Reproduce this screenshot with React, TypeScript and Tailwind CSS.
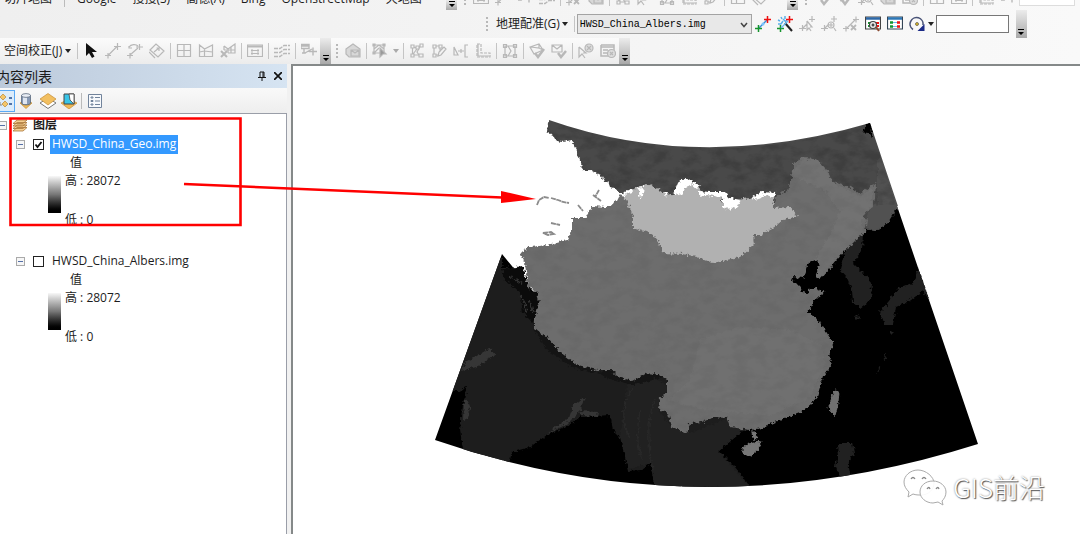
import type { ReactNode } from 'react'

type IconName =
  | 'pointer' | 'link' | 'curve' | 'diamond' | 'grid' | 'mesh' | 'meshX' | 'table' | 'streams' | 'join'
  | 'house' | 'editArrow' | 'nodes' | 'nodePen' | 'align' | 'corner' | 'square' | 'check' | 'boxCheck'
  | 'arrowX' | 'listX' | 'addPoint' | 'wand' | 'linkCursor' | 'linkZoom' | 'linkX' | 'viewZoom' | 'view' | 'rotate'

const icons: Record<IconName, ReactNode> = {
  pointer: <path d="M3 0v13l3-3 3 5 2.500-1.500L9 9h5z" fill="#111" stroke="none" />,
  link: <path d="M0 12.500h6M3 10v5.500M3 12.500l9-9M9 3.500h7M12.500 0v7" />,
  curve: <path d="M0 12.500h6M3 10v5.500M3 12l8-7M2 4c2-3 7-3 9-1M9 4h7M12.500 1v6M2 3v2h3" />,
  diamond: <path d="M1 7l6-6 8 7-6 6zM5 9l5-4M7.500 5H10v3M0 9l6 6" />,
  grid: <path d="M1.500 1.500h13v12h-13zM8 1.500v12M1.500 7.500h13" />,
  mesh: <path d="M1.500 2l5 4 8-4v11.500h-13zM6.500 6v7.500M1.500 9l5-1 8 1" />,
  meshX: <><path d="M4 3l4 3 7-5v9H8M8 6v4M4 3v4M4 7h11M11 4v6" /><path d="M1 8l6 6M7 8l-6 6" strokeWidth="2" /></>,
  table: <><path d="M.5 2h15v11.500H.5z" /><path d="M.5 3.500h15" strokeWidth="2" /><path d="M4 7.500h2M10 7.500h2M4 10.500h2M10 10.500h2" strokeWidth="2" /><path d="M6 7.500h4M6 10.500h4" /></>,
  streams: <path d="M0 5.500h6l4-3h6M0 9.500h6l4-3h6M0 13.500h6l4-3h6" strokeDasharray="4 1" strokeWidth="1.400" />,
  join: <path d="M0 1.500h8v4H0zM0 3h8M3 5.500v5M1 10h4M4 10l7-4M8 8.500h8M12 4.500v8" strokeWidth="1.400" />,
  house: <><path d="M1 6l7-5 7 5v8H4L1 11z" fill="#d8d8d8" /><path d="M6 7h8v6H6zM6 7l4 3 4-3" /></>,
  editArrow: <><path d="M2 2h10v8H2zM2 6l5-4 5 4M2 10l5-5M1 1h2v2H1zM11 1h2v2h-2zM1 9h2v2H1z" /><path d="M8 5l6 6-3 0-3 3z" fill="#999" /></>,
  nodes: <path d="M2 2h3v3H2zM7 3h3v3H7zM11 1h3v3h-3zM2 11h3v3H2zM10 11h4v3h-4zM3.500 5v6M5 4l2 1M10 4l1-1M8 6l-4 5M10 12l-2-3 3-5M5 12h5" />,
  nodePen: <path d="M2 2h3v3H2zM8 2h3v3H8zM2 11h3v3H2zM3 5v6M5 3h3M9 5v4M5 12h3M7 13l1-4 5-5 2 2-5 6z" />,
  align: <path d="M1 4v8h4zM5 8h6M8 6v4M15 2h-3v12h3" />,
  corner: <><path d="M2 1h4v9h9v4H2z" strokeDasharray="3 1" /><path d="M3 1v12h11" /></>,
  square: <path d="M3 3h10v10H3zM1.500 1.500h3v3h-3zM11.500 1.500h3v3h-3zM1.500 11.500h3v3h-3zM11.500 11.500h3v3h-3zM6 3l3 5-3 5" />,
  check: <><path d="M1 4l9-3 4 6-9 4zM2 4l8 1 0-4M10 5l4 2" /><path d="M6 10l3 4 6-8" strokeWidth="2.500" /></>,
  boxCheck: <><path d="M1 2h10v7H1zM1 2l5 4 5-4" /><path d="M7 10l3 4 5-6" strokeWidth="2.500" /></>,
  arrowX: <><path d="M1 4v10l3-3 3 4M1 4l7 6H5" /><circle cx="11" cy="5" r="4" fill="#ddd" /><path d="M9 3l4 4M13 3L9 7" /></>,
  listX: <><path d="M1 2h13v9M1 2v11h7M1 4h13M3 7h5M3 10h4" strokeWidth="1.500" /><circle cx="11.500" cy="10.500" r="4" fill="#ddd" /><path d="M10 9l3 3M13 9l-3 3" /></>,
  addPoint: (
    <>
      <path d="M4 12l8-8" stroke="#3a8fd8" strokeWidth="1.500" />
      <path d="M0 12.500h7M3.500 9v7" stroke="#15942d" strokeWidth="1.500" />
      <path d="M9 3.500h7M12.500 0v7" stroke="#e11" strokeWidth="1.500" />
      <circle cx="8" cy="8" r="1.500" fill="#7ac4ff" stroke="none" />
    </>
  ),
  wand: (
    <>
      <path d="M1 4l2 1M4 1l1 2M8 0v3M1 8h3M10 4L8 6M4 8l2-3M6 3l2 2" stroke="#59aee8" strokeWidth="1.500" />
      <path d="M8 7l7 8" stroke="#222" strokeWidth="2" />
      <path d="M0 12.500h7M3.500 9v7" stroke="#15942d" strokeWidth="1.500" />
      <path d="M4 12l7-7" stroke="#68b8ee" />
      <path d="M9 3.500h7M12.500 0v7" stroke="#e11" strokeWidth="1.500" />
    </>
  ),
  linkCursor: <path d="M0 12.500h7M3.500 9v6M4 12l4-4M10 3.500h6M13 0v6M8 5v9l2-2 2 3M8 5l5 6h-2" />,
  linkZoom: <path d="M0 12.500h7M3.500 9v6M4 12l4-4M10 3h6M13 0v6M13 12l2 3M8 9h4M10 7v4M13 9a3 3 0 1 1-6 0 3 3 0 0 1 6 0" />,
  linkX: <><path d="M0 12.500h6M3 10v5.500M4 12l8-8M10 3.500h6M13 .5v6" /><path d="M8 9l5 5M13 9l-5 5" strokeWidth="1.800" /></>,
  viewZoom: (
    <>
      <path d="M.5 1h15v12H.5z" fill="#fff" stroke="#444" />
      <path d="M1 2.500h14" stroke="#2d68a8" strokeWidth="2.500" />
      <path d="M3 7h2M3 10h2" stroke="#15942d" strokeWidth="2" />
      <path d="M11 7h3M12 10h2" stroke="#e11" strokeWidth="2" />
      <circle cx="8" cy="9" r="3.500" fill="#eee" stroke="#444" />
      <path d="M6.500 9h3M8 7.500v3" stroke="#222" />
      <path d="M11 11l3 4" stroke="#8a4b32" strokeWidth="2" />
    </>
  ),
  view: (
    <>
      <path d="M.5 1h15v12H.5z" fill="#fff" stroke="#345" />
      <path d="M1 2.500h14" stroke="#2d78b8" strokeWidth="2.500" />
      <path d="M3 6.500h3M3 10.500h3" stroke="#15942d" strokeWidth="2.500" />
      <path d="M10 6.500h3M10 10.500h3" stroke="#e11" strokeWidth="2.500" />
      <path d="M6 6.500h4M6 10.500h4" stroke="#68b8ee" />
    </>
  ),
  rotate: (
    <>
      <path d="M4 13.500A6.500 6.500 0 1 1 14 9" stroke="#4a5478" strokeWidth="1.600" />
      <path d="M15.500 8v7H8.500z" fill="#1b2a86" stroke="none" />
      <circle cx="8" cy="8" r="1.500" fill="#e5c02a" stroke="#333" strokeWidth=".6" />
    </>
  ),
}

const Icon = ({ name }: { name: IconName }) => (
  <svg viewBox="0 0 16 16" className="w-4 h-4" fill="none" stroke="#b8b8b8" strokeWidth="1.200" aria-hidden="true">
    {icons[name]}
  </svg>
)

const ToolButton = ({ name }: { name: IconName }) => (
  <button type="button" aria-label={name} className="w-[22px] h-[22px] shrink-0 flex items-center justify-center">
    <Icon name={name} />
  </button>
)

const Separator = () => <span className="w-px h-4 mx-[2px] shrink-0 bg-[#c4c4c4]" />

const Caret = ({ muted = false }: { muted?: boolean }) => (
  <svg viewBox="0 0 6 4" className={`w-[6px] h-1 shrink-0 ${muted ? 'fill-[#aaa]' : 'fill-[#222]'}`} aria-hidden="true">
    <path d="M0 0h6L3 4z" />
  </svg>
)

const Dots = () => (
  <svg viewBox="0 0 3 16" className="w-[3px] h-4 mx-[3px] shrink-0 fill-[#b8b8b8]" aria-hidden="true">
    <path d="M0 1h2v2H0zM0 5h2v2H0zM0 9h2v2H0zM0 13h2v2H0z" />
  </svg>
)

const Overflow = () => (
  <button
    type="button"
    aria-label="more"
    className="w-[11px] self-stretch shrink-0 flex items-end justify-center pb-[3px] bg-linear-to-b from-[#ececec] to-[#a9a9a9]"
  >
    <svg viewBox="0 0 6 6" className="w-[6px] h-[6px] fill-black" aria-hidden="true">
      <path d="M0 0h6v1H0zM0 3h6L3 6z" />
    </svg>
  </button>
)

const basemaps = ['Google', '搜搜(S)', '高德(A)', 'Bing', 'OpenstreetMap', '天地图']

const upperTools: IconName[][] = [
  ['table', 'link', 'join', 'streams'],
  ['linkX', 'house'],
  ['nodes', 'arrowX', 'square', 'corner', 'nodePen'],
  ['mesh', 'diamond'],
]

const upperToolsRight: IconName[][] = [
  ['boxCheck', 'check', 'linkZoom', 'house', 'listX'],
  ['grid', 'table'],
  ['corner', 'join'],
]

const BasemapBar = () => (
  <div className="h-[10px] flex items-end overflow-hidden">
    <nav className="flex items-end gap-4 pl-1 w-[446px] shrink-0 pb-[3px] whitespace-nowrap leading-4">
      <button type="button">切片地图</button>
      <span className="w-px h-3 bg-[#bbb] -mx-1" />
      {basemaps.map((name) => (
        <button type="button" key={name}>{name}</button>
      ))}
    </nav>
    <Overflow />
    <div className="flex items-center pl-1 pb-px">
      <Dots />
      {upperTools.map((group, i) => (
        <div key={i} className="flex items-center">
          {i > 0 && <Separator />}
          {group.map((name) => <ToolButton key={name} name={name} />)}
        </div>
      ))}
    </div>
    <span className="w-4 shrink-0" />
    <Overflow />
    <div className="flex items-center pl-1 pb-px">
      <Dots />
      {upperToolsRight.map((group, i) => (
        <div key={i} className="flex items-center">
          {i > 0 && <Separator />}
          {group.map((name) => <ToolButton key={name} name={name} />)}
        </div>
      ))}
    </div>
    <input aria-label="scale" className="w-14 h-5 mb-1 bg-white border border-[#ddd]" />
  </div>
)

const GeoreferenceBar = () => (
  <div className="h-7 flex items-center pl-[483px]">
    <Dots />
    <button type="button" className="flex items-center gap-[2px] px-1 whitespace-nowrap">
      地理配准(G) <Caret />
    </button>
    <Separator />
    <div className="relative shrink-0">
      <select
        aria-label="图层"
        className="block appearance-none w-[175px] h-5 pl-[2px] border border-[#a3a3a3] bg-[#e8e8e8] font-['Liberation_Mono',monospace] text-[10px] text-black"
      >
        <option>HWSD_China_Albers.img</option>
      </select>
      <svg viewBox="0 0 8 6" className="absolute right-1 top-2 w-2 h-[6px] pointer-events-none" fill="none" stroke="#444" strokeWidth="1.500" aria-hidden="true">
        <path d="M1 1l3 3.500L7 1" />
      </svg>
    </div>
    {(['addPoint', 'wand', 'linkCursor', 'linkZoom', 'linkX', 'viewZoom', 'view', 'rotate'] as IconName[]).map((name) => (
      <ToolButton key={name} name={name} />
    ))}
    <Caret />
    <input aria-label="角度" className="w-[73px] h-[18px] ml-[2px] mr-[7px] shrink-0 bg-white border border-[#777]" />
    <Overflow />
  </div>
)

const adjustTools: IconName[][] = [
  ['pointer', 'link', 'curve', 'diamond'],
  ['grid', 'mesh', 'meshX'],
  ['table'],
  ['streams'],
  ['join'],
]

const topologyTools: IconName[][] = [
  ['nodes', 'nodePen', 'align', 'corner'],
  ['square'],
  ['check', 'boxCheck'],
  ['arrowX', 'listX'],
]

const AdjustmentBar = () => (
  <div className="h-[26px] flex items-center">
    <div className="h-full flex items-center bg-linear-to-b from-[#fbfbfb] to-[#ececec]">
      <button type="button" className="w-[75px] shrink-0 flex items-center gap-[3px] pl-1 whitespace-nowrap">
        空间校正(J) <Caret />
      </button>
      {adjustTools.map((group, i) => (
        <div key={i} className="flex items-center">
          <Separator />
          {group.map((name) => <ToolButton key={name} name={name} />)}
        </div>
      ))}
      <Overflow />
    </div>
    <div className="h-full flex items-center bg-linear-to-b from-[#fbfbfb] to-[#ececec] pl-[2px]">
      <Dots />
      <ToolButton name="house" />
      <Separator />
      <ToolButton name="editArrow" />
      <span className="w-[10px] flex justify-center"><Caret muted /></span>
      {topologyTools.map((group, i) => (
        <div key={i} className="flex items-center">
          <Separator />
          {group.map((name) => <ToolButton key={name} name={name} />)}
        </div>
      ))}
      <Overflow />
    </div>
  </div>
)

const Expander = () => (
  <button type="button" aria-label="collapse" className="w-[9px] h-[9px] shrink-0 flex items-center justify-center border border-[#aaa] bg-[#f6f6f6]">
    <span className="w-[5px] h-px bg-[#5570a8]" />
  </button>
)

interface RasterLayer {
  name: string
  high: number
  low: number
  visible: boolean
  selected: boolean
}

const layers: RasterLayer[] = [
  { name: 'HWSD_China_Geo.img', high: 28072, low: 0, visible: true, selected: true },
  { name: 'HWSD_China_Albers.img', high: 28072, low: 0, visible: false, selected: false },
]

const LayerNode = ({ layer }: { layer: RasterLayer }) => (
  <li className="pb-[23px]">
    <div className="h-5 flex items-center pl-4">
      <Expander />
      <label className="flex items-center">
        <input
          type="checkbox"
          defaultChecked={layer.visible}
          className="peer appearance-none w-[11px] h-[11px] ml-2 border border-[#222] bg-white"
        />
        <svg viewBox="0 0 11 11" className="w-[11px] h-[11px] -ml-[11px] mr-[6px] invisible peer-checked:visible pointer-events-none" fill="none" stroke="#111" strokeWidth="1.800" aria-hidden="true">
          <path d="M2.500 5.500l2 2.500 4-5" />
        </svg>
        <span className={layer.selected ? 'h-[19px] leading-[18px] px-[2px] bg-[#3399ff] text-white' : 'h-[19px] leading-[18px] px-[2px]'}>
          {layer.name}
        </span>
      </label>
    </div>
    <div className="h-[18px] leading-[18px] pl-[70px]">值</div>
    <div className="flex gap-1 pl-12">
      <div className="w-[13px] h-[37px] mt-1 bg-linear-to-b from-[#f8f8f8] via-[#777] to-black" />
      <div className="h-14 flex flex-col justify-between leading-[17px]">
        <span>高 : {layer.high}</span>
        <span>低 : {layer.low}</span>
      </div>
    </div>
  </li>
)

const ContentsPanel = () => (
  <aside className="w-[287px] shrink-0 flex flex-col">
    <header className="h-6 flex items-center bg-linear-to-r from-[#bccadb] to-[#d6e4f2] overflow-hidden">
      <h2 className="flex-1 -ml-1 text-[14px] whitespace-nowrap">内容列表</h2>
      <button type="button" aria-label="pin" className="w-4 h-4 flex items-center justify-center">
        <svg viewBox="0 0 8 10" className="w-2 h-[10px]" fill="none" stroke="#111"><path d="M2 6V1h4v5M5 1v5M0 6.500h8M4 6.500V10" /></svg>
      </button>
      <button type="button" aria-label="close" className="w-4 h-4 mr-px flex items-center justify-center">
        <svg viewBox="0 0 8 8" className="w-2 h-2" fill="none" stroke="#111" strokeWidth="1.700"><path d="M0 0l8 8M8 0L0 8" /></svg>
      </button>
    </header>
    <div className="h-[25px] flex items-center bg-linear-to-b from-[#f9f9f9] to-[#eee]">
      <button type="button" aria-label="按绘制顺序列出" className="w-[15px] h-[22px] flex items-center justify-end border border-l-0 border-[#5aa9f5] bg-[#dcecfb]">
        <svg viewBox="0 0 14 16" className="w-[14px] h-4">
          <path d="M3 1l3 3-3 3-3-3zM5 8l3 3-3 3-3-3z" fill="#f4c669" stroke="#b98637" strokeWidth=".7" />
          <path d="M0 9v3h2" fill="none" stroke="#888" />
          <path d="M9 4h3v2H9zM9 10h3v2H9z" fill="#5173a8" />
        </svg>
      </button>
      <button type="button" aria-label="按源列出" className="w-[22px] flex justify-center">
        <svg viewBox="0 0 16 16" className="w-4 h-4">
          <path d="M2 10l6-3 6 3-6 5.500z" fill="#efb956" stroke="#c58d33" strokeWidth=".7" />
          <path d="M3.500 2.500V10c0 2.500 9 2.500 9 0V2.500z" fill="#8799b5" stroke="#4b5a70" strokeWidth=".7" />
          <path d="M5 4h4v7H5z" fill="#dfe6f1" />
          <ellipse cx="8" cy="2.500" rx="4.500" ry="1.900" fill="#e8edf5" stroke="#4b5a70" strokeWidth=".7" />
        </svg>
      </button>
      <button type="button" aria-label="按可见性列出" className="w-[21px] flex justify-center">
        <svg viewBox="0 0 16 16" className="w-4 h-4">
          <path d="M0 10l8-5 8 5-8 5.500z" fill="#fff" stroke="#777" />
          <path d="M0 6l8-5.500L16 6l-8 6z" fill="#f2bf60" stroke="#c58d33" strokeWidth=".7" />
        </svg>
      </button>
      <button type="button" aria-label="按选择列出" className="w-[22px] flex justify-center">
        <svg viewBox="0 0 16 16" className="w-4 h-4">
          <path d="M0 10l8-4 8 4-8 6z" fill="#efb956" stroke="#c58d33" strokeWidth=".7" />
          <path d="M3 1h10v10H3z" fill="#38c5e8" stroke="#444" />
          <path d="M8 1h5v10l-4-4z" fill="#fff" stroke="#444" strokeWidth=".8" />
        </svg>
      </button>
      <span className="w-px h-4 bg-[#bbb] ml-px mr-[6px]" />
      <button type="button" aria-label="选项">
        <svg viewBox="0 0 14 14" className="w-[14px] h-[14px]" fill="#f7f9fc" stroke="#71839b">
          <path d="M.5.5h13v13H.5z" />
          <path d="M3 3h2v1H3zM3 6.500h2v1H3zM3 10h2v1H3zM7 3.500h5M7 7h5M7 10.500h5" />
        </svg>
      </button>
    </div>
    <div className="flex-1 bg-white border-t border-r border-[#9a9ea8] pt-[2px] whitespace-nowrap">
      <div className="h-[18px] flex items-center">
        <span className="-ml-[2px]"><Expander /></span>
        <svg viewBox="0 0 16 13" className="w-4 h-[13px] ml-[5px] mr-[5px]" fill="#f6cf91" stroke="#a9763a" strokeWidth=".8" aria-hidden="true">
          <path d="M1 12l4-3.500h10L11 12zM1 9.500L5 6h10l-4 3.500zM1 7l4-3.500h10L11 7zM1 4.500L5 1h10l-4 3.500z" />
        </svg>
        <span className="font-bold leading-[18px]">图层</span>
      </div>
      <ul>
        {layers.map((layer) => <LayerNode key={layer.name} layer={layer} />)}
      </ul>
    </div>
  </aside>
)

const siberia = 'M549 120L580 130 620 139 660 145 700 148 740 148 780 144 820 137 850 129 870 123 895 202 892 213 886 223 879 230 870 231 862 226 840 240 640 240 620 195 615 192 610 188 605 183 602 176 592 171 583 171 580 160 577 150 572 140 562 142 556 141 553 135 547 132z'
const china = 'M620 194L617 200 607 207 592 206 585 218 572 218 572 230 567 240 548 245 530 247 520 253 525 262 526 272 528 287 537 292 539 303 535 318 535 328 547 338 560 352 577 365 597 370 612 370 620 378 633 381 647 373 660 375 667 380 667 393 660 398 658 408 668 413 672 427 687 433 690 423 703 422 713 417 727 418 730 427 750 430 763 428 780 420 800 413 811 404 817 397 823 377 832 365 829 355 834 345 827 333 817 318 808 312 817 298 825 292 815 288 833 265 845 250 853 248 865 233 867 220 863 215 873 207 875 197 876 183 860 194 850 187 833 182 827 170 817 159 803 158 793 163 793 173 788 190 777 195 773 208z'
const mongolia = 'M620 194L628 191 637 187 647 184 657 188 667 195 677 193 678 182 687 178 698 185 703 193 720 193 725 208 733 208 738 200 750 198 762 192 775 195 773 208 790 207 797 216 783 220 773 228 760 235 753 235 754 244 740 257 713 263 697 257 683 254 663 253 657 238 647 232 633 228 633 217 628 203z'
const southAsia = 'M502 254L502 266 510 268 522 266 530 290 560 340 620 365 672 370 690 415 730 415 750 430 735 432 719 451 735 467 744 478 750 487 700 489 655 486 650 463 641 470 628 471 628 456 623 440 613 430 610 415 580 417 570 425 547 435 530 447 512 452 509 463 490 458 463 450 460 430 462 410 467 385 462 391 451 391z'

const SoilMap = () => (
  <svg viewBox="293 66 787 468" className="w-full h-auto block" role="img" aria-label="HWSD_China_Geo.img">
    <defs>
      <filter id="ragged" x="-5%" y="-5%" width="110%" height="110%" colorInterpolationFilters="sRGB">
        <feTurbulence type="fractalNoise" baseFrequency=".3" numOctaves="2" seed="4" result="n" />
        <feDisplacementMap in="SourceGraphic" in2="n" scale="6" xChannelSelector="R" yChannelSelector="G" />
      </filter>
      <filter id="grain" x="0" y="0" width="100%" height="100%" colorInterpolationFilters="sRGB">
        <feTurbulence type="fractalNoise" baseFrequency=".06 .1" numOctaves="5" seed="9" />
        <feColorMatrix values="0 0 0 0 0  0 0 0 0 0  0 0 0 0 0  3 0 0 0 -1.200" />
      </filter>
      <clipPath id="frame">
        <path d="M549 120Q700 173 870 123L978 444Q700 532 435 440L502 254 540 240 530 180z" />
      </clipPath>
      <clipPath id="north"><path d={siberia} /></clipPath>
      <clipPath id="land"><path d={china} /></clipPath>
    </defs>
    <path d="M502 254L435 440Q700 532 978 444L895 200 850 190 700 300 540 300z" fill="#000" />
    <g clipPath="url(#frame)">
      <g filter="url(#ragged)">
        <path d={southAsia} fill="#1d1d1d" />
        <path d="M480 270L502 254 480 320 451 391 435 395z" fill="#1d1d1d" />
        <path d="M627 385L645 374 668 385 666 397 659 410 672 428 690 433 728 418 744 430 719 451 750 488 655 487 650 463 628 470 620 437z" fill="#212121" />
        <path d="M633 388C620 405 622 425 631 440M640 412Q634 440 643 462M654 400Q644 430 653 470" fill="none" stroke="#282828" strokeWidth="1.500" />
        <path d="M502 268L523 268 529 290 538 292 538 315 533 323 523 313 520 292 505 280z" fill="#0b0b0b" />
        <path d="M520 295l5 8 1 10M510 276l12 8M530 301l3 11" stroke="#333" strokeWidth="1.500" fill="none" />
        <path d="M461 371L466 362 475 357 490 348 495 355 479 366zM464 400l7 4-4 14-4 2zM547 434l11-9 11-7 4-12 12-10-5 15-13 13zM580 411l18 1-1 5-17-1z" fill="#363636" />
        <path d="M533 328L547 338 560 352 577 365 597 370 592 373 570 366 548 351zM598 373l10-4 10 8 16 4 14-8 17 3-5 2-26 7-22-5z" fill="#141414" />
        <path d="M549 112L700 140 880 112 895 202 892 213 886 223 879 230 870 231 862 226 840 240 640 240 620 195 615 192 610 188 605 183 602 176 592 171 583 171 580 160 577 150 572 140 562 142 556 141 553 135 547 132z" fill="#494949" />
        <path d="M877 160L883 155 900 203 887 224 874 231 865 226 868 212 877 203 877 184z" fill="#515151" />
      </g>
      <g clipPath="url(#north)">
        <rect x="540" y="115" width="360" height="90" filter="url(#grain)" opacity=".14" />
      </g>
      <g filter="url(#ragged)">
        <path d={china} fill="#6d6d6d" />
        <path d="M790 175L803 159 818 160 835 184 860 196 872 188 872 204 862 218 863 232 848 247 831 263 818 282 807 270 830 235 840 212 824 190z" fill="#727272" />
        <path d="M700 340L740 326 790 330 822 345 825 365 810 398 770 416 700 409 668 400 690 380z" fill="#707070" />
      </g>
      <g clipPath="url(#land)">
        <rect x="515" y="150" width="365" height="285" filter="url(#grain)" opacity=".04" />
      </g>
      <g filter="url(#ragged)">
        <path d={mongolia} fill="#b1b1b1" />
        <path d="M792 281L793 277 803 278 808 263 817 261 819 267 815 277 820 279 830 268 841 266 842 278 851 282 850 302 826 307 812 315 808 312 817 298 825 293 818 288 810 288 808 294 803 293 801 286z" fill="#000" />
        <path d="M845 251L863 233 862 250 853 263 863 273 872 283 871 300 860 308 853 303 852 289 847 278 840 270z" fill="#212121" />
        <path d="M918 267L930 300 922 291 907 302 896 307 893 325 885 325 880 312 890 301 897 289 913 283z" fill="#212121" />
        <path d="M835 390L839 391 838 403 835 417 829 407z" fill="#707070" stroke="#707070" />
        <path d="M743 447L753 442 761 443 757 451 750 456 743 453zM752 432h4l1 7-4-1z" fill="#777" stroke="#777" />
        <path d="M838 443L852 443 854 453 848 463 851 478 840 478 835 465 839 458z" fill="#212121" />
        <path d="M856 316h3v3h-3zM891 332h2v2h-2zM886 353l-2 8M880 366l-2 7" fill="#222" stroke="#222" />
        <path d="M862 132L870 120 873 138 868 133z" fill="#000" />
      </g>
      <g filter="url(#ragged)" fill="#fff">
        <path d="M603 181l5 0 2 6 5 1 4 5 8 0-3 3-7-1-4 9-7 3-13-3 4-18z" />
        <path d="M623 193l8-4 2 3-6 1zM637 187l7-1-1 9-3 5-1-8zM664 192l4 0-2 5zM674 192l4-10 9-4 12 8-1 4-7-6-6 4-3 8-5-2zM699 191l11 1 15 0 5 6 11 2-4 7-9 3-5-3v-9l-15-3-9 1zM752 198l10-6 14 1-2 5-7-3-12 5z" />
      </g>
    </g>
    <path d="M537 205l2-5 5-3 5 1M551 198l7 2 5 2 6 1M578 205l5 6M593 195l8 6M599 190l-4 7M551 223l9 2M543 233l8-1 3 2-6 1z" fill="none" stroke="#8b8b8b" strokeWidth="1.800" strokeDasharray="5 .5" />
  </svg>
)

const Watermark = () => (
  <div className="absolute right-[35px] bottom-[28px] flex items-center gap-[6px] text-white">
    <svg viewBox="0 0 44 38" className="w-11 h-[38px]" fill="#fff" fillOpacity=".92" stroke="#aaa" strokeWidth="1" aria-hidden="true">
      <path d="M15 2C7 2 1 8 1 14c0 4 2 7 5 10l-1 5 5-3c3 1 5 1 8 1 8 0 13-6 13-12S23 2 15 2z" />
      <path d="M30 13c-8 0-13 5-13 11s6 11 13 11l5-1 5 3-1-4c2-2 4-5 4-9 0-6-6-11-13-11z" />
      <path d="M8 11q2-3 4 0M19 11q2-3 4 0M24 21q2-3 3 0M33 21q2-3 3 0" fill="none" stroke="#888" strokeWidth="1.300" />
    </svg>
    <span className="font-['Noto_Sans_CJK_SC',sans-serif] text-[26px] leading-[38px] font-light [text-shadow:1px_1px_1px_#555,0_0_2px_#888]">GIS前沿</span>
  </div>
)

// red callout linking the active layer to the map
const Callout = () => (
  <svg viewBox="0 0 560 240" className="absolute left-0 top-0 w-[560px] h-60 pointer-events-none" fill="none" stroke="#f00" aria-hidden="true">
    <path d="M10.500 118.500h230v106.500h-230z" strokeWidth="2.600" />
    <path d="M184 184L502 197.500" strokeWidth="2.600" />
    <path d="M501 191l35 8-35 4z" fill="#f00" stroke="none" />
  </svg>
)

export default function App() {
  return (
    <div className="relative min-h-screen flex flex-col overflow-hidden bg-[#f1f1f1] font-['Open_Sans','Noto_Sans_CJK_SC',sans-serif] text-[12px] text-[#1c1c1c]">
      <div className="shrink-0 bg-linear-to-r from-[#efefef] to-[#f9f9f9]">
        <BasemapBar />
        <GeoreferenceBar />
        <AdjustmentBar />
      </div>
      <div className="flex-1 flex">
        <ContentsPanel />
        <main className="relative flex-1 min-w-0 ml-1 bg-white border-t-2 border-l-2 border-[#858989]">
          <SoilMap />
          <Watermark />
        </main>
      </div>
      <Callout />
    </div>
  )
}
